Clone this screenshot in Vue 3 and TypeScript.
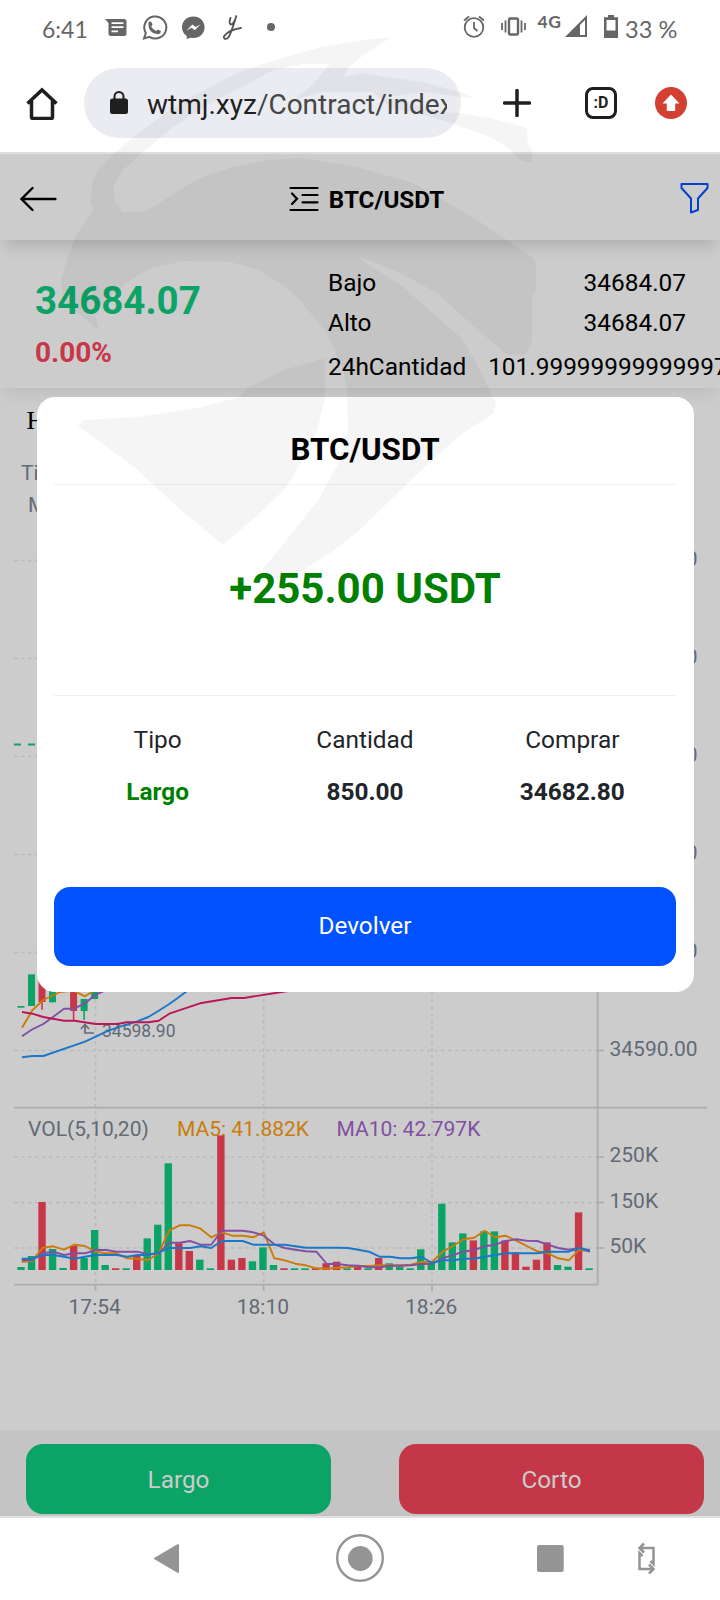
<script setup lang="ts">
interface Level { y: number; label: string }
interface Candle { i: number; top: number; bottom: number; high: number; low: number; up: boolean }

const step = 10.52
const cx = (i: number): number => 21 + i * step

const priceLevels: Level[] = [
  { y: 560.5, label: '34740.00' },
  { y: 658.5, label: '34710.00' },
  { y: 756.5, label: '34680.00' },
  { y: 854.5, label: '34650.00' },
  { y: 952.5, label: '34620.00' },
  { y: 1050.5, label: '34590.00' },
]
const volumeLevels: Level[] = [
  { y: 1157, label: '250K' },
  { y: 1202.6, label: '150K' },
  { y: 1248, label: '50K' },
]
const times = [
  { x: 95.5, label: '17:54' },
  { x: 263.7, label: '18:10' },
  { x: 432, label: '18:26' },
]

const candles: Candle[] = [
  { i: 0, top: 1006, bottom: 1007.7, high: 1006, low: 1007, up: true },
  { i: 1, top: 974.3, bottom: 1006, high: 975, low: 1005, up: true },
  { i: 2, top: 970, bottom: 1002, high: 965, low: 1009.7, up: false },
  { i: 3, top: 980, bottom: 1002.3, high: 980, low: 1002, up: true },
  { i: 5, top: 985, bottom: 1011, high: 980, low: 1021, up: false },
  { i: 6, top: 999, bottom: 1011, high: 999, low: 1020, up: true },
  { i: 7, top: 985, bottom: 999, high: 985, low: 999, up: true },
]

const volumes: number[] = [
  3, 14, 68, 21, 2, 24, 12, 40, 5, 1.7, 1.7, 14, 31.6, 45.3, 106.7, 26.7, 19, 10.3, 1.7, 134.6,
  10.3, 12, 8.7, 22.6, 5, 1.7, 1.7, 1.7, 1.7, 6.7, 8.3, 1.7, 5, 1.7, 12, 6.7, 3.3, 1.7, 20.7, 6.7,
  66.3, 27.6, 36.6, 29.6, 38.6, 38.6, 29.6, 17.6, 3.3, 10.3, 27.6, 5, 3.3, 57.6, 1.7,
]
const falling = new Set<number>([2, 5, 9, 11, 15, 16, 19, 20, 21, 25, 28, 29, 30, 32, 34, 43, 46, 47, 48, 49, 50, 53])

const ma5 = [486, 482, 443, 439, 449, 434, 438, 455, 460, 460, 475, 476, 481, 460, 392, 376, 376, 386, 412, 397, 407, 407, 412, 397, 475, 481, 491, 496, 505, 506, 503, 502, 498, 498, 496, 496, 496, 494, 486, 486, 455, 438, 418, 413, 392, 412, 407, 422, 438, 454, 460, 475, 481, 449, 454]
const ma10 = [480, 480, 460, 455, 465, 460, 460, 450, 450, 455, 455, 455, 463, 460, 428, 428, 423, 434, 434, 392, 392, 392, 397, 407, 433, 444, 449, 454, 455, 492, 492, 496, 497, 502, 502, 497, 497, 496, 492, 491, 475, 465, 455, 450, 439, 434, 423, 418, 422, 423, 434, 444, 449, 444, 455]
const ma20 = [476, 476, 465, 465, 470, 476, 470, 465, 465, 465, 470, 465, 465, 458, 444, 444, 444, 439, 444, 423, 423, 423, 434, 434, 434, 434, 439, 443, 443, 443, 443, 444, 449, 455, 470, 470, 475, 475, 470, 489, 481, 481, 476, 476, 470, 465, 460, 460, 460, 460, 455, 455, 455, 444, 451]
const line = (v: number[]): string =>
  v.map((y, i) => `${(cx(i) + 0.8).toFixed(1)},${(1100 + y / 3).toFixed(1)}`).join(' ')
</script>

<template>
  <div class="screen">
    <header class="status">
      <div class="clock">6:41</div>
      <svg class="status-icons" width="180" height="32" viewBox="100 12 180 32">
        <path fill="#666" fill-rule="evenodd" d="M105 19H124q2.500 0 2.500 2.500V33.500q0 2.500-2.500 2.500H111q-2.500 0-2.500-2.500V23zM111.500 22.300h12v1.700h-12zM111.500 26.300h12v1.700h-12zM111.500 30.500h6.500v1.700h-6.500z" />
        <path fill="none" stroke="#666" stroke-width="2" d="M144 38.500L145.800 33A11 11 0 1 1 149.500 36.800Z" />
        <path fill="#666" d="M149 21.500l2.300.2 1.200 3-1.300 1.700q1.700 3.300 5 4.600l1.600-1.600 3 1.500q.3 3-3.300 3.300Q148.500 33.500 148.300 23.500z" />
        <path fill="#666" fill-rule="evenodd" d="M193.300 16.500c6.500 0 11.300 4.600 11.300 10.700s-4.800 10.800-11.300 10.800l-2.600-.3-4 1.300v-3.200c-3-2-4.700-5-4.700-8.600 0-6.100 4.800-10.700 11.300-10.700zM186.500 30.600l5.900-6.200 3.200 2.500 4.800-2.500-5.600 5.900-3.200-2.500z" />
        <path fill="none" stroke="#555" stroke-width="1.900" stroke-linecap="round" d="M230.500 18q-2 6 .5 6.500 3 0 5.500-9-3 10-6.300 18.500-2 5.500-5.500 4.800-2.500-2 2.300-5.600 5-3.800 14-5.200" />
        <circle cx="271" cy="27" r="4" fill="#666" />
      </svg>
      <svg class="signal-icons" width="160" height="32" viewBox="460 12 160 32">
        <g fill="none" stroke="#666" stroke-width="1.800">
          <circle cx="474" cy="27.500" r="9.300" />
          <path d="M474 22v6l3.500 3M464 20.500l5-4M484 20.500l-5-4" />
          <rect x="509" y="18.500" width="9" height="16" rx="1.500" stroke-width="2.400" />
          <path d="M505.500 20.500v12M502 23v7M521.500 20.500v12M525 23v7" />
        </g>
        <text x="537.500" y="28" class="net">4G</text>
        <path fill="#666" d="M565 37L587 15v22z" />
        <path fill="#fff" d="M580 25l5-5v15h-5z" />
        <path fill="#666" fill-rule="evenodd" d="M608 15h6v2.200h4V38h-14V17.200h4zM606.500 20h9v10.500h-9z" />
      </svg>
      <div class="battery">33 %</div>
    </header>

    <div class="browser">
      <svg class="home" width="34" height="34" viewBox="0 0 34 34" fill="none" stroke="#1f1f1f" stroke-width="3.500">
        <path d="M2.500 17.500L17 4 31.500 17.500M6.500 14.500V31q0 1.500 1.500 1.500H26q1.500 0 1.500-1.500V14.500" stroke-linejoin="miter" />
      </svg>
      <div class="omnibox">
        <svg width="18" height="24" viewBox="0 0 18 24"><path d="M4.500 9V5.500a4.500 4.500 0 0 1 9 0V9" fill="none" stroke="#1f1f1f" stroke-width="2" /><rect y="7.500" width="18" height="15.500" rx="2.500" fill="#1f1f1f" /></svg>
        <div class="url">wtmj.xyz<span>/Contract/index</span></div>
      </div>
      <svg class="plus" width="28" height="28" viewBox="0 0 28 28"><path d="M14 1.500v25M1.500 14h25" stroke="#1f1f1f" stroke-width="3.500" stroke-linecap="round" /></svg>
      <div class="tabs">:D</div>
      <svg class="update" width="32" height="32" viewBox="0 0 32 32"><circle cx="16" cy="16" r="16" fill="#d33f30" /><path d="M16 7.500l8.500 9h-4.300V24h-8.400v-7.500H7.500z" fill="#fff" /></svg>
    </div>

    <main class="page">
      <div class="topbar">
        <svg class="back" width="38" height="26" viewBox="0 0 38 26" fill="none" stroke="#000" stroke-width="2.300" stroke-linecap="round"><path d="M12.500 2L1.500 13l11 11M1.500 13h34" /></svg>
        <div class="pair">
          <svg width="30" height="26" viewBox="0 0 30 26" fill="none" stroke="#000" stroke-width="2.200" stroke-linecap="round"><path d="M1.500 2h27M13.500 9h15M13.500 16.300h15M1.500 24h27M3 7.500l5 5.200-5 5.200" /></svg>
          <span>BTC/USDT</span>
        </div>
        <svg class="filter" width="30" height="32" viewBox="0 0 30 32" fill="none" stroke="#0641cc" stroke-width="2" stroke-linejoin="round"><path d="M1.500 2h26v4L18 16.500V28l-7 2.500v-14L1.500 6z" /></svg>
      </div>

      <section class="quote">
        <div class="last">
          <strong class="price">34684.07</strong>
          <strong class="change">0.00%</strong>
        </div>
        <dl class="stats">
          <div><dt>Bajo</dt><dd>34684.07</dd></div>
          <div><dt>Alto</dt><dd>34684.07</dd></div>
          <div class="volume"><dt>24hCantidad</dt><dd>101.99999999999997</dd></div>
        </dl>
      </section>

      <svg class="chart" width="720" height="1042" viewBox="0 388 720 1042">
        <text x="26.500" y="429" class="serif">H</text>
        <text x="21" y="480">Time:</text>
        <text x="28" y="512">MA5:</text>
        <g class="grid">
          <path v-for="l in priceLevels" :key="l.label" :d="`M14 ${l.y}H598`" />
          <path v-for="l in volumeLevels" :key="l.label" :d="`M14 ${l.y}H598`" />
          <path v-for="t in times" :key="t.label" :d="`M${t.x} 530V1284`" stroke-width="2" />
        </g>
        <path d="M14 744.500H598" stroke="#0ca367" stroke-width="2" stroke-dasharray="7 7" />
        <g class="axis">
          <path d="M14 1107.700H707M14 1284.700H598.500M597.700 530V1284" />
          <path v-for="t in times" :key="t.label" :d="`M${t.x} 1285v6`" />
          <path v-for="l in [...priceLevels, ...volumeLevels]" :key="l.label" :d="`M598 ${l.y}h6`" />
        </g>
        <text v-for="l in priceLevels" :key="l.label" x="609.500" :y="l.y + 5">{{ l.label }}</text>
        <text v-for="l in volumeLevels" :key="l.label" x="609.500" :y="l.y + 5">{{ l.label }}</text>
        <text v-for="t in times" :key="t.label" :x="t.x - 0.800" y="1313.500" text-anchor="middle">{{ t.label }}</text>
        <text x="28" y="1136">VOL(5,10,20)</text>
        <text x="177" y="1136" class="m5">MA5: 41.882K</text>
        <text x="336.500" y="1136" class="m10">MA10: 42.797K</text>

        <g v-for="c in candles" :key="c.i" :fill="c.up ? '#0ca367' : '#c73748'">
          <rect :x="cx(c.i) - 3.500" :y="c.top" width="7" :height="c.bottom - c.top" />
          <rect :x="cx(c.i) - 0.800" :y="c.high" width="1.600" :height="c.low - c.high" />
        </g>
        <rect v-for="(v, i) in volumes" :key="i" :x="cx(i) - 3.700" :y="1270 - v" width="7.400" :height="v" :fill="falling.has(i) ? '#c73748' : '#0ca367'" />

        <path class="mark" d="M94 1033H85V1025M81 1029l4-4.500 4 4.500" />
        <text x="102" y="1037" class="low">34598.90</text>

        <g class="ma">
          <polyline class="c5" points="22,1027.700 32.300,1010.300 43.300,1000 60,992 73.300,990.600 85,996.300 95,990" />
          <polyline class="c10" points="22,1036.300 32.300,1029.300 43.300,1024 53,1017 64,1008.700 74,1008.700 85,1003.300 95.700,994.700 103.300,991.300" />
          <polyline class="c20" points="22,1057.300 32.300,1056 43.300,1056 85,1041.700 95.700,1036.700 106.700,1031.300 120,1026.700 136.700,1021.700 148.300,1017 158.700,1010.700 169.300,1004 176.700,998.700 186.700,991.300 200,980" />
          <polyline class="c30" points="22,1012 32.300,1013.700 43.300,1017 64,1020.700 74.700,1020.700 95.700,1024 117.300,1024 126.700,1022.300 148.300,1022.300 158.700,1020.700 169.300,1013.700 200,1003.300 231.700,998 244,998 283.300,991.700 300,989" />
          <polyline class="c5" :points="line(ma5)" />
          <polyline class="c10" :points="line(ma10)" />
          <polyline class="c20" :points="line(ma20)" />
        </g>
      </svg>

      <footer class="trade">
        <button class="long">Largo</button>
        <button class="short">Corto</button>
      </footer>
    </main>

    <nav class="nav">
      <svg width="720" height="82" viewBox="0 1518 720 82">
        <path d="M155 1558.500L178 1545v27z" fill="#949494" stroke="#949494" stroke-width="2" stroke-linejoin="round" />
        <circle cx="360" cy="1558" r="22.800" fill="none" stroke="#949494" stroke-width="2.400" />
        <circle cx="360.300" cy="1558.500" r="12.400" fill="#949494" />
        <rect x="537" y="1545" width="26.700" height="27" rx="2" fill="#949494" />
        <g fill="none" stroke="#949494" stroke-width="2.500"><path d="M640 1548H653.500V1564l-3-3M653 1569H639.500V1553l3 3" /><path d="M644 1543.500l-4.500 4.500 4.500 4.500M649 1564.500l4.500 4.500-4.500 4.500" /></g>
      </svg>
    </nav>

    <section class="dialog">
      <h2>BTC/USDT</h2>
      <div class="profit">+255.00 USDT</div>
      <div class="details">
        <div><span>Tipo</span><b class="green">Largo</b></div>
        <div><span>Cantidad</span><b>850.00</b></div>
        <div><span>Comprar</span><b>34682.80</b></div>
      </div>
      <button class="return">Devolver</button>
    </section>

    <svg class="watermark" width="720" height="600" viewBox="0 0 720 600">
      <path d="M392 37L363 40 321 47 275 60 239 72 202 91 174 107 142 130 119 149 99 168 92 183 91 204 94 209 76 235 66 262 61 280 63 298 73 309 92 325 99 330 94 311 105 300 129 281 151 268 184 261 230 262 257 269 280 283 298 298 317 321 327 334 333 347 342 367 347 387 348 430 337 466 318 500 285 542 262 570 273 582 300 572 330 553 360 530 413 478 459 436 494 413 496 401 492 397 485 380 475 360 460 337 437 317 403 287 363 261 360 257 400 273 437 293 470 323 507 355 527 354 532 340 532 297 536 290 536 262 532 257 507 240 477 220 443 200 413 183 360 168 333 163 300 158 267 160 233 167 207 175 187 185 167 198 157 205 143 212 123 212 115 202 113 187 123 170 145 150 174 127 210 103 250 83 273 70 303 64 330 64 310 87 293 100 323 92 373 92 390 108 423 115 457 125 490 137 507 147 520 160 532 163 532 150 528 145 527 128 490 118 460 113 443 112 417 105 387 97 423 92 477 99 463 93 423 82 387 77 363 73 343 77 348 68 360 58 375 47Z" />
      <path d="M325 358L287 369 271 376 248 388 239 397 202 407 138 417 83 420 78 426 133 466 174 504 223 545 257 516 285 489 303 459 317 432 325 397Z" />
    </svg>
  </div>
</template>

<style>
html, body { margin: 0; background: #fff; overflow: hidden; }
</style>

<style scoped>
.screen { position: relative; width: 720px; height: 1600px; overflow: hidden; background: #fff; font-family: Roboto, "Liberation Sans", sans-serif; color: #000; display: flex; flex-direction: column; }
svg { display: block; flex: none; }
button { border: 0; padding: 0; font: inherit; }

.status { height: 56px; flex: none; display: flex; box-sizing: border-box; padding: 12px 0 0 42px; font: 23px/34px Lato, "Open Sans", sans-serif; color: #666; }
.clock { width: 58px; white-space: nowrap; }
.signal-icons { margin-left: 180px; }
.battery { margin-left: 5px; white-space: nowrap; font-size: 23.600px; }
.net { font: bold 17.500px Lato, sans-serif; fill: #666; letter-spacing: .5px; }

.browser { height: 98px; flex: none; display: flex; align-items: center; box-sizing: border-box; padding: 0 33px 2px 25px; border-bottom: 2px solid #dedede; }
.omnibox { margin-left: 25px; width: 377px; height: 70px; border-radius: 35px; background: #ebecf1; display: flex; align-items: center; box-sizing: border-box; padding-left: 26px; }
.url { margin-left: 19px; padding-top: 3px; width: 300px; overflow: hidden; white-space: nowrap; font-size: 28px; line-height: 40px; color: #1f1f1f; }
.url span { color: #454746; }
.plus { margin-left: 42px; }
.tabs { margin-left: 54px; width: 32px; height: 32px; box-sizing: border-box; border: 3.500px solid #1f1f1f; border-radius: 8px; font: bold 16px/26px Roboto, sans-serif; text-align: center; color: #1f1f1f; }
.update { margin-left: 38px; }

.page { height: 1362px; flex: none; display: flex; flex-direction: column; background: #ccc; }
.topbar { height: 86px; flex: none; display: flex; justify-content: space-between; align-items: center; box-sizing: border-box; padding: 4px 10px 0 20px; position: relative; z-index: 2; background: #ccc; box-shadow: 0 10px 15px -5px rgba(0, 0, 0, .16); }
.pair { display: flex; align-items: center; gap: 10px; font-size: 24.200px; font-weight: 700; margin-right: 5px; }
.pair span { padding-top: 2px; }
.filter { margin-bottom: 2px; }
.quote { height: 148px; flex: none; position: relative; z-index: 1; display: flex; background: #ccc; box-shadow: 0 8px 15px -3px rgba(0, 0, 0, .08); overflow-x: clip; }
.last { width: 293px; padding-left: 35px; display: flex; flex-direction: column; flex: none; }
.price { margin-top: 39px; font-size: 38.500px; line-height: 44px; color: #0ca367; }
.change { margin-top: 12px; font-size: 28px; line-height: 36px; color: #c73748; }
.stats { margin: 23px 34px 0 0; flex: 1; min-width: 0; font-size: 24.400px; line-height: 40px; }
.stats div { display: flex; justify-content: space-between; white-space: nowrap; }
.stats dd { margin: 0; }
.stats .volume { margin-top: 4px; justify-content: flex-start; gap: 22px; }

.chart { font-family: Roboto, sans-serif; }
.chart text { font-size: 21px; fill: #626a75; }
.chart .serif { font: 26px "Liberation Serif", serif; fill: #000; }
.chart .low { font-size: 17.500px; }
.chart .m5 { fill: #c97c0b; }
.chart .m10 { fill: #8150a2; }
.grid path { fill: none; stroke: #bababa; stroke-width: 1.600; stroke-dasharray: 3.500 3.500; }
.axis path { fill: none; stroke: #adadad; stroke-width: 1.800; }
.mark { fill: none; stroke: #626a75; stroke-width: 1.700; }
.ma polyline { fill: none; stroke-width: 1.900; stroke-linejoin: round; }
.ma .c5 { stroke: #cb7c08; }
.ma .c10 { stroke: #824fa5; }
.ma .c20 { stroke: #1978c8; }
.ma .c30 { stroke: #bd1459; }

.trade { height: 86px; box-sizing: border-box; background: #c4c4c4; padding: 14px 16px 2px 26px; display: flex; justify-content: space-between; flex: none; }
.trade button { width: 305px; height: 70px; border-radius: 17px; color: #ccc; font-size: 24.300px; }
.trade .long { background: #0ca367; }
.trade .short { background: #c43748; }

.nav { height: 82px; flex: none; border-top: 2px solid #e0e0e0; background: #fff; }

.dialog { position: absolute; z-index: 5; left: 37px; top: 397px; width: 657px; height: 595px; box-sizing: border-box; padding: 0 18px 0 17px; border-radius: 18px; background: #fff; display: flex; flex-direction: column; }
.dialog h2 { margin: 0; height: 88px; box-sizing: border-box; padding-top: 33px; font-size: 31.300px; line-height: 39px; text-align: center; border-bottom: 1px solid #f0f0f0; }
.profit { height: 211px; box-sizing: border-box; border-bottom: 1px solid #f0f0f0; display: flex; align-items: center; justify-content: center; font-size: 42px; font-weight: 700; color: #008000; padding-bottom: 3px; }
.details { display: grid; grid-template-columns: repeat(3, 1fr); height: 191px; box-sizing: border-box; padding-top: 24px; font-size: 24.400px; line-height: 40px; text-align: center; color: #212529; }
.details div { display: flex; flex-direction: column; gap: 12px; }
.details .green { color: #008000; }
.return { height: 79px; border-radius: 16px; background: #0052ff; color: #fff; font-size: 24.400px; padding-bottom: 2px; }

.watermark { position: absolute; z-index: 9; left: 0; top: 0; pointer-events: none; }
.watermark path { fill: #000; fill-opacity: .038; }
</style>
